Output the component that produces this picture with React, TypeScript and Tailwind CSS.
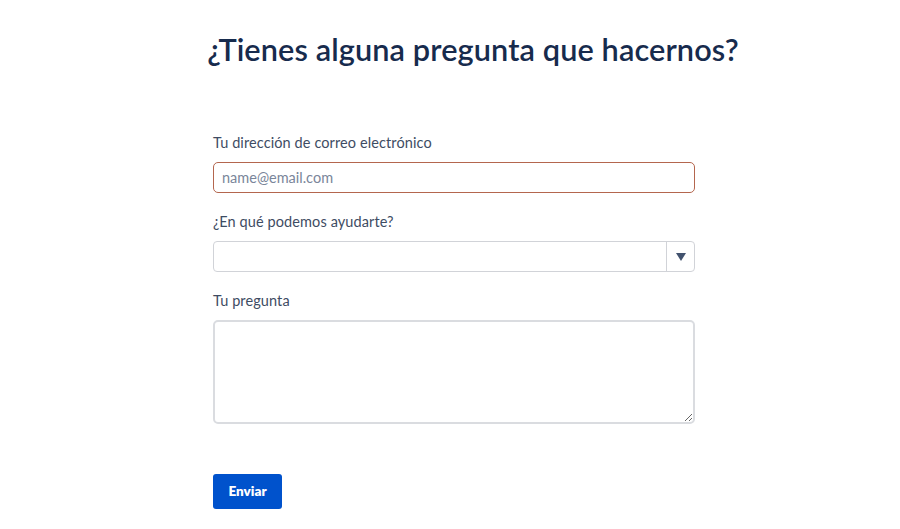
export default function App() {
  return (
    <div className="min-h-[529px] w-full bg-white font-['Lato','Noto_Sans',sans-serif]">
      <div className="pt-[30px] pl-[46px] text-center">
        <h1 className="text-[30.7px] leading-[40px] font-semibold text-[#172B4D] tracking-[0.1px]">
          ¿Tienes alguna pregunta que hacernos?
        </h1>
      </div>

      <form className="mx-auto mt-[63px] w-[482px] translate-x-[4px]" onSubmit={(e) => e.preventDefault()}>
        <label className="block text-[14.5px] leading-[20px] tracking-[0.1px] text-[#3E4C63]">
          Tu dirección de correo electrónico
        </label>
        <input
          type="email"
          placeholder="name@email.com"
          className="mt-[9px] block h-[31px] w-full rounded-[5px] border border-[#B4664E] px-[8px] text-[14.5px] text-[#172B4D] placeholder:text-[#7A869A] outline-none"
        />

        <label className="mt-[19px] block text-[14.5px] leading-[20px] tracking-[0.1px] text-[#3E4C63]">
          ¿En qué podemos ayudarte?
        </label>
        <div className="mt-[9px] flex h-[31px] w-full rounded-[4px] border border-[#D1D3D8]">
          <div className="flex-1" />
          <div className="flex w-[28px] items-center justify-center border-l border-[#D1D3D8]">
            <svg width="10" height="8" viewBox="0 0 10 8">
              <path d="M0 0 L10 0 L5 8 Z" fill="#42526E" />
            </svg>
          </div>
        </div>

        <label className="mt-[19px] block text-[14.5px] leading-[20px] tracking-[0.1px] text-[#3E4C63]">
          Tu pregunta
        </label>
        <textarea className="mt-[9px] block h-[104px] w-full rounded-[5px] border-2 border-[#DADCE0] px-[8px] py-[6px] text-[14px] outline-none" />

        <button
          type="submit"
          className="mt-[50px] h-[35px] w-[69px] rounded-[3px] bg-[#0052CC] text-[13.5px] font-extrabold text-white"
        >
          Enviar
        </button>
      </form>
    </div>
  )
}
